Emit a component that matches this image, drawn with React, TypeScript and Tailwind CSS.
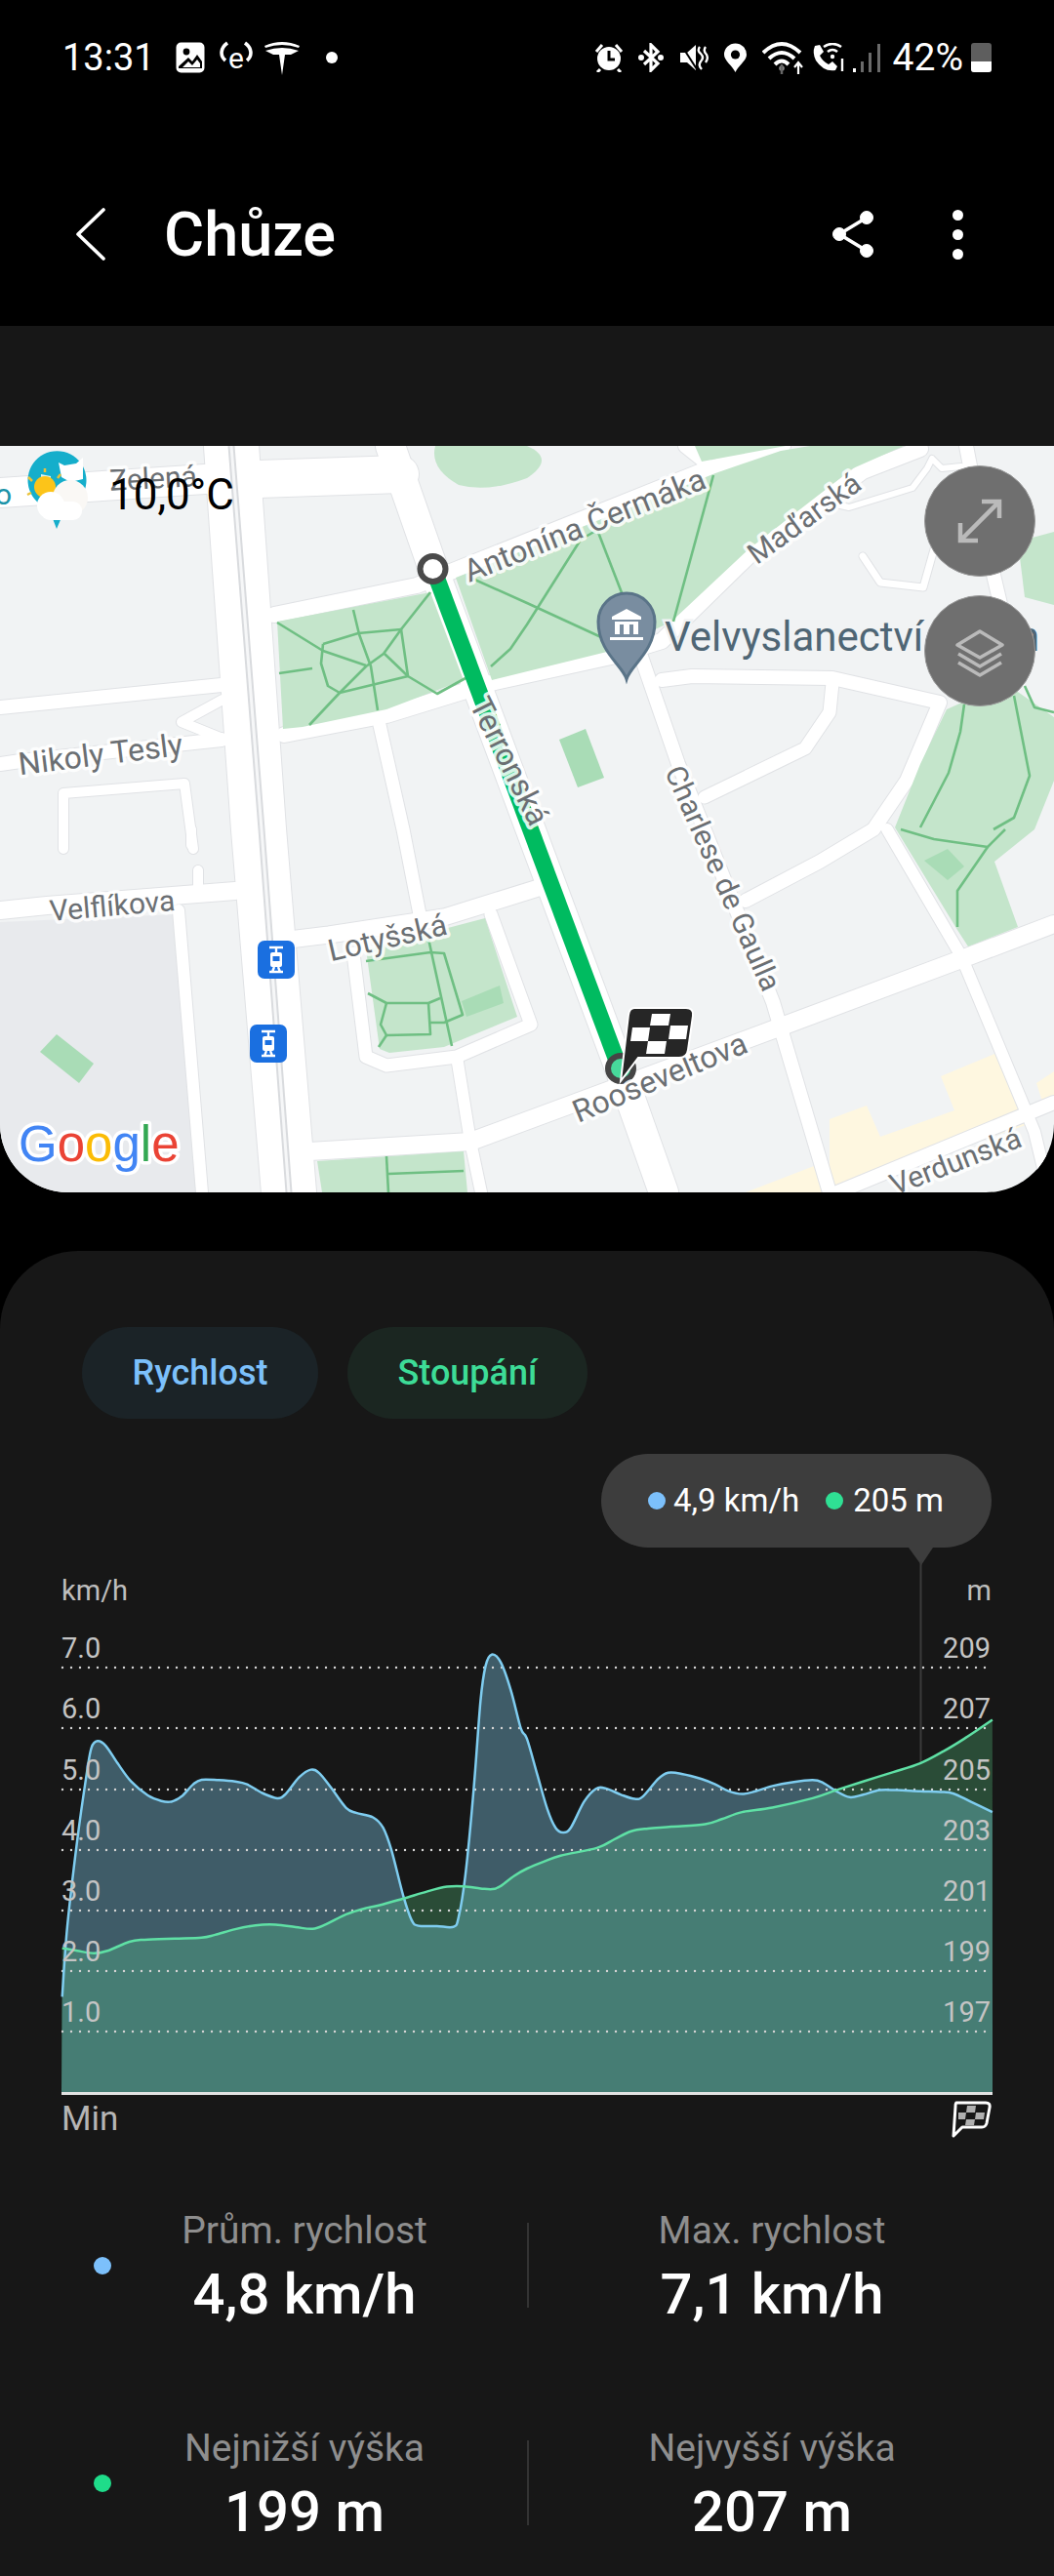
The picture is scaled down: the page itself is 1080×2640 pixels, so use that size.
import React from "react";

type Pt = [number, number];

const smooth = (pts: Pt[]) => {
  let d = `M${pts[0][0]},${pts[0][1]}`;
  for (let i = 0; i < pts.length - 1; i++) {
    const p0 = pts[Math.max(i - 1, 0)];
    const p1 = pts[i];
    const p2 = pts[i + 1];
    const p3 = pts[Math.min(i + 2, pts.length - 1)];
    const c1x = p1[0] + (p2[0] - p0[0]) / 6;
    const c1y = p1[1] + (p2[1] - p0[1]) / 6;
    const c2x = p2[0] - (p3[0] - p1[0]) / 6;
    const c2y = p2[1] - (p3[1] - p1[1]) / 6;
    d += ` C${c1x.toFixed(1)},${c1y.toFixed(1)} ${c2x.toFixed(1)},${c2y.toFixed(1)} ${p2[0].toFixed(1)},${p2[1].toFixed(1)}`;
  }
  return d;
};

// traced from the left / right half of the chart
const toL = (p: number[]): Pt => [p[0] / 2.904, 1600 + p[1] / 2.8];
const toR = (p: number[]): Pt => [540 + p[0] / 2.904, 1600 + p[1] / 2.8];

const speedPts: Pt[] = [
  ...[[185,1250],[200,1050],[230,800],[258,610],[272,535],[290,516],[315,530],[350,580],[390,632],[440,672],[480,688],[510,690],[540,675],[575,640],[600,627],[650,628],[700,632],[735,640],[780,665],[825,680],[850,668],[890,620],[925,598],[950,608],[985,650],[1030,708],[1060,722],[1110,735],[1140,765],[1165,830],[1200,960],[1225,1030],[1245,1046],[1300,1047],[1350,1049],[1365,1020],[1385,900],[1410,650],[1430,400],[1445,300],[1463,268],[1490,290],[1520,370],[1550,480]].map(toL),
  ...[[0,510],[30,610],[60,710],[85,765],[107,778],[130,765],[170,690],[205,653],[235,652],[280,670],[320,682],[345,675],[390,625],[420,607],[460,610],[520,625],[560,640],[600,660],[640,668],[680,660],[730,645],[790,634],[850,628],[880,635],[920,660],[960,677],[1000,670],[1050,657],[1100,657],[1170,660],[1230,662],[1270,667],[1320,690],[1385,720]].map(toR),
];

const heightPts: Pt[] = [
  ...[[185,1110],[230,1118],[280,1125],[320,1118],[385,1092],[430,1086],[520,1083],[600,1080],[640,1072],[700,1056],[760,1045],[820,1043],[880,1050],[930,1055],[970,1042],[1030,1013],[1090,995],[1130,987],[1200,968],[1270,948],[1330,934],[1380,933],[1430,939],[1465,941],[1490,932],[1530,903]].map(toL),
  ...[[0,882],[50,862],[100,845],[210,822],[260,798],[310,775],[360,767],[430,762],[530,755],[580,740],[640,720],[730,707],[850,680],[920,657],[1000,632],[1090,605],[1170,580],[1240,545],[1300,510],[1385,455]].map(toR),
];

const speedLine = smooth(speedPts);
const heightLine = smooth(heightPts);
const speedArea = `${speedLine} L1017,2144 L63,2144 Z`;
const heightArea = `${heightLine} L1017,2144 L63,2144 Z`;

const gridRows = [
  { y: 1709, l: "7.0", r: "209" },
  { y: 1771, l: "6.0", r: "207" },
  { y: 1834, l: "5.0", r: "205" },
  { y: 1896, l: "4.0", r: "203" },
  { y: 1958, l: "3.0", r: "201" },
  { y: 2020, l: "2.0", r: "199" },
  { y: 2082, l: "1.0", r: "197" },
];

const Chart = () => (
  <svg width="1080" height="564" viewBox="0 1586 1080 564" className="block shrink-0" fontFamily="Roboto, sans-serif">
    <defs>
      <clipPath id="speedClip">
        <path d={speedArea} />
      </clipPath>
    </defs>
    <path d="M931,1586 L956,1586 L944,1604 Z" fill="#3d3d3d" />
    <path d="M943.5,1600 V1832" stroke="#3a3a3a" strokeWidth="2" />
    <path d={speedArea} fill="#3f5c68" />
    <path d={heightArea} fill="#2a4c37" />
    <path d={heightArea} fill="#467d74" clipPath="url(#speedClip)" />
    {gridRows.map((g) => (
      <line key={g.y} x1="64" x2="1014" y1={g.y} y2={g.y} stroke="#d4d4d4" strokeWidth="2.4" strokeLinecap="round" strokeDasharray="0 9" />
    ))}
    <path d={speedLine} fill="none" stroke="#7fcdf0" strokeWidth="2.5" />
    <path d={heightLine} fill="none" stroke="#5fe0a5" strokeWidth="2.5" />
    <path d="M63,2145.5 H1017" stroke="#e2e2e2" strokeWidth="3" />
    <text x="63" y="1640" fontSize="29" fill="#bdbdbd">km/h</text>
    <text x="1016" y="1640" fontSize="29" fill="#bdbdbd" textAnchor="end">m</text>
    {gridRows.map((g) => (
      <g key={g.l} fontSize="29" fill="#c4c4c4">
        <text x="63" y={g.y - 10}>{g.l}</text>
        <text x="1015" y={g.y - 10} textAnchor="end">{g.r}</text>
      </g>
    ))}
  </svg>
);

const roads: [string, number][] = [
  ["237,457 265,850 296,1222", 56],
  ["0,505 225,490", 30],
  ["265,491 410,486", 38],
  ["400,457 444,583 635,1095 680,1222", 30],
  ["281,630 427,600 719,483 802,457", 16],
  ["702,457 722,473", 14],
  ["291,753 396,733 503,700 626,673 678,657 767,570 884,483 943,460", 16],
  ["656,670 695,783 792,1027 850,1222", 14],
  ["678,697 709,693 853,695 963,720 929,800 895,850 840,883 764,923", 14],
  ["853,700 850,730 825,767 722,817", 13],
  ["317,1180 482,1170 806,1050 985,983 1080,947", 18],
  ["0,933 48,928 241,913", 18],
  ["296,963 337,958 455,940 558,908", 17],
  ["0,783 21,780 227,758", 14],
  ["0,725 227,702", 14],
  ["389,743 413,850 430,937", 13],
  ["503,937 544,1050 468,1083 396,1092 375,1083 362,977", 13],
  ["468,1083 482,1170 493,1222", 12],
  ["909,850 985,980 1060,1160 1075,1222", 12],
  ["183,933 207,1222", 12],
  ["858,1222 1080,1130", 14],
  ["990,457 1005,534 1030,640 1040,700", 14],
  ["65,870 65,813 189,803 198,870", 10],
  ["884,570 902,597 946,602 957,563", 7],
  ["857,517 870,520 935,500 950,480 955,470 965,480 985,478", 6],
  ["228,717 186,740 228,757", 10],
  ["196,850 196,866", 10],
  ["203,892 203,912", 10],
];

const parkPaths: string[] = [
  "284,638 331,667 375,682",
  "441,607 411,645 393,670 375,683 348,710 317,743",
  "362,625 368,650 380,683 387,728",
  "331,660 367,649 411,645 418,693 448,711 477,695",
  "331,660 329,680 336,703 348,710 418,693",
  "394,670 418,693",
  "286,690 320,685",
  "731,487 690,637",
  "612,543 638,610",
  "595,553 612,543",
  "595,553 540,640 523,665 503,683",
  "482,592 540,618 616,653",
  "988,722 984,750 972,792 943,848",
  "923,850 957,860 1012,868 1030,850",
  "1012,868 981,913 981,950",
  "1039,713 1055,795 1039,838 1018,850",
  "1050,703 1060,725 1080,730",
  "375,985 441,976 455,977 474,1040 455,1048 441,1048",
  "439,962 463,1072",
  "377,1018 396,1028 439,1028 451,1023",
  "396,1028 390,1050 396,1061 441,1060 439,1028",
  "396,1061 388,1073",
  "396,1185 398,1222",
  "398,1203 475,1200",
];

const MapLabel = ({ x, y, a, size, children }: { x: number; y: number; a: number; size: number; children: React.ReactNode }) => (
  <text
    x={x}
    y={y}
    fontSize={size}
    fill="#6b6f73"
    textAnchor="middle"
    dominantBaseline="central"
    transform={`rotate(${a} ${x} ${y})`}
    stroke="#ffffff"
    strokeOpacity="0.85"
    strokeWidth="7"
    strokeLinejoin="round"
    style={{ paintOrder: "stroke" }}
  >
    {children}
  </text>
);

const Tram = ({ x, y }: { x: number; y: number }) => (
  <g transform={`translate(${x} ${y})`}>
    <rect width="38" height="39" rx="7" fill="#1a6fe0" />
    <path d="M12,7 H26 M12,32 H26 M19,7 V12 M15,32 L17,27 M23,32 L21,27" stroke="#fff" strokeWidth="2.4" fill="none" />
    <rect x="13" y="12" width="12" height="15" rx="2" fill="#fff" />
    <rect x="15.5" y="16" width="7" height="5" fill="#1a6fe0" />
  </g>
);

const MapDrawing = () => (
  <svg width="1080" height="765" viewBox="0 457 1080 765" className="block" fontFamily="Roboto, sans-serif">
    <rect x="0" y="457" width="1080" height="765" fill="#f1f3f4" />
    <path d="M0,945 L180,937 L205,1222 L0,1222 Z" fill="#e8eaed" />
    <path d="M850,1147 L888,1133 L902,1165 L978,1138 L964,1103 L1019,1080 L1060,1150 L850,1222 Z M764,1222 L847,1190 L857,1222 Z M1062,1110 L1080,1098 L1080,1130 L1070,1135 Z" fill="#fef7e0" />
    {roads.map(([p, w], i) => (
      <polyline key={i} points={p} fill="none" stroke="#e0e2e5" strokeWidth={w + 2} strokeLinejoin="round" strokeLinecap="round" />
    ))}
    {roads.map(([p, w], i) => (
      <polyline key={i} points={p} fill="none" stroke="#ffffff" strokeWidth={w} strokeLinejoin="round" strokeLinecap="round" />
    ))}
    <polyline points="237,457 268,850 296,1222" fill="none" stroke="#d9dbde" strokeWidth="7" />
    <polyline points="237,457 268,850 296,1222" fill="none" stroke="#f6f7f8" strokeWidth="3" />

    {/* parks */}
    <g fill="#c4e5cb">
      <path d="M446,457 L540,457 Q570,470 540,490 Q500,505 470,497 Q440,480 446,457 Z" />
      <path d="M284,637 L441,607 L475,697 L396,727 L310,745 L290,747 Z" />
      <path d="M467,592 L733,485 L800,462 L830,457 L926,457 L874,480 L767,563 L688,637 L626,667 L504,697 Z" />
      <path d="M719,473 L805,457 L712,457 Z" />
      <path d="M970,727 L943,783 L917,848 L981,953 L992,970 L1043,950 L1019,883 L1060,850 L1080,800 L1080,735 L1030,700 Z" />
      <path d="M1043,555 L1080,545 L1080,620 L1050,612 Z" />
      <path d="M375,973 L497,941 L530,1042 L455,1073 L399,1079 L389,1075 Z" />
      <path d="M325,1190 L475,1180 L479,1222 L330,1222 Z" />
    </g>
    <g fill="#a9dcb6">
      <path d="M573,758 L600,747 L619,797 L592,807 Z" />
      <path d="M41,1078 L58,1060 L96,1090 L81,1110 Z" />
      <path d="M947,882 L971,870 L988,888 L971,902 Z" />
      <path d="M473,1026 L512,1010 L516,1028 L478,1042 Z" />
    </g>
    {parkPaths.map((p, i) => (
      <polyline key={i} points={p} fill="none" stroke="#6fbf83" strokeWidth="2.6" strokeLinejoin="round" />
    ))}

    {/* route */}
    <polyline points="444,583 635,1095" fill="none" stroke="#00bb60" strokeWidth="17" />
    <circle cx="443.5" cy="583" r="13" fill="#fff" stroke="#4a4a4a" strokeWidth="6" />
    <circle cx="636" cy="1095" r="13" fill="#47d99b" stroke="#454545" strokeWidth="6" />

    <MapLabel x={599} y={538} a={-21.7} size={32}>Antonína Čermáka</MapLabel>
    <MapLabel x={824} y={531} a={-36} size={30}>Maďarská</MapLabel>
    <MapLabel x={522} y={780} a={63.5} size={32}>Terronská</MapLabel>
    <MapLabel x={103} y={773} a={-7} size={32}>Nikoly Tesly</MapLabel>
    <MapLabel x={115} y={928} a={-5} size={30}>Velflíkova</MapLabel>
    <MapLabel x={397} y={961} a={-13} size={31}>Lotyšská</MapLabel>
    <MapLabel x={741} y={900} a={66} size={30}>Charlese de Gaulla</MapLabel>
    <MapLabel x={676} y={1104} a={-22.7} size={32}>Rooseveltova</MapLabel>
    <MapLabel x={979} y={1190} a={-21} size={30}>Verdunská</MapLabel>
    <MapLabel x={157} y={490} a={-3} size={30}>Zelená</MapLabel>

    {/* embassy pin */}
    <path d="M642,696 C638,682 613,668 613,637 A29,29 0 0 1 671,637 C671,668 646,682 642,696 Z" fill="#798da0" stroke="#5a7488" strokeWidth="3" />
    <path d="M642,624 L627,632 V635 H657 V632 Z M630,637 H654 V650 H649 V640 H645 V650 H639 V640 H635 V650 H630 Z M625,653 H659 V656 H625 Z" fill="#fff" />
    <text x="681" y="667" fontSize="42" fill="#4f6675" stroke="#f1f3f4" strokeWidth="5" style={{ paintOrder: "stroke" }}>Velvyslanectví</text>
    <text x="1042" y="667" fontSize="42" fill="#4f6675">n</text>

    <Tram x={264} y={964} />
    <Tram x={256} y={1050} />

    {/* finish flag */}
    <path d="M650,1033 H703 Q711,1033 710,1041 L705,1076 Q704,1084 696,1084 L654,1084 L636,1108 L644,1040 Q645,1033 650,1033 Z" fill="#262626" stroke="#fff" strokeWidth="2" />
    <path d="M668,1039 H687 L685,1051 H666 Z M687,1051 H705 L703,1065 H685 Z M648,1053 H666 L664,1067 H646 Z M664,1067 H683 L681,1080 H662 Z" fill="#fff" />

    <text x="19" y="1190" fontFamily="'Liberation Sans', sans-serif" fontSize="51" stroke="#ffffff" strokeWidth="7" strokeLinejoin="round" style={{ paintOrder: "stroke" }}>
      <tspan fill="#4285f4">G</tspan>
      <tspan fill="#ea4335">o</tspan>
      <tspan fill="#fbbc05">o</tspan>
      <tspan fill="#4285f4">g</tspan>
      <tspan fill="#34a853">l</tspan>
      <tspan fill="#ea4335">e</tspan>
    </text>

    {/* weather pin */}
    <path d="M58,542 L50,521 A30,30 0 1 1 67,521 Z" fill="#15aecb" />
    <path d="M60,474 L66,477 L78,475 L85,469 V491 L72,494 L63,489 Z" fill="#fff" />
    <path d="M42,486 L52,488 V500 L42,500 Z" fill="#fff" opacity="0.85" />
    <circle cx="46" cy="499" r="11" fill="#fcc419" />
    <path d="M33,493 L29,489 M46,484 V480 M59,490 L62,486 M32,505 L28,507" stroke="#e9c23a" strokeWidth="2.5" />
    <circle cx="72" cy="510" r="18" fill="#faf8f5" />
    <circle cx="52" cy="518" r="14" fill="#fff" />
    <rect x="42" y="514" width="42" height="19" rx="9" fill="#fff" />
    <text x="-5" y="517" fontSize="30" fill="#1c93a8">o</text>
  </svg>
);

const Expand = () => (
  <svg width="60" height="60" viewBox="0 0 60 60" fill="none" stroke="#bababa" strokeWidth="4.5">
    <path d="M10,50 L50,10 M32,10 H50 V27 M10,32 V50 H28" />
  </svg>
);

const Layers = () => (
  <svg width="60" height="60" viewBox="0 0 60 60" fill="none" stroke="#bababa" strokeWidth="3.5" strokeLinejoin="round">
    <path d="M30,10 L53,24 L30,37 L7,24 Z" />
    <path d="M8,33 L30,46 L52,33 M8,42 L30,55 L52,42" />
  </svg>
);

const ImageIcon = () => (
  <svg width="30" height="32" viewBox="0 0 30 32" className="ml-[21px]">
    <rect x="1.5" y="1.5" width="27" height="29" rx="4" fill="#fff" stroke="#fff" strokeWidth="2" />
    <circle cx="11" cy="10" r="3.4" fill="#000" />
    <path d="M3,25 L13,16 L17,20 L22,13 L27,20 V27 H3 Z" fill="#000" />
    <path d="M7,26 L13,20 L17,24 L22,18 L25,22 V26 Z" fill="#fff" />
  </svg>
);

const EdgeIcon = () => (
  <svg width="36" height="38" viewBox="0 0 36 38" className="ml-[14px]" fontFamily="Roboto, sans-serif">
    <text x="18" y="30" fontSize="30" fill="#fff" textAnchor="middle">e</text>
    <path d="M9,4 C2,9 1,17 7,22 M27,4 C34,9 35,17 29,22" stroke="#fff" strokeWidth="3.6" fill="none" />
  </svg>
);

const TeslaIcon = () => (
  <svg width="38" height="36" viewBox="0 0 38 36" className="ml-[10px]" fill="#fff">
    <path d="M1,6 Q19,-2 37,6 L36,8 Q19,2 2,8 Z" />
    <path d="M2,11 Q19,5 36,11 L28,15 H22 L19,36 L16,15 H10 Z" />
  </svg>
);

const StatusRight = () => (
  <div className="flex items-center">
    {/* alarm */}
    <svg width="30" height="30" viewBox="0 0 30 30">
      <path d="M2,9 L8,2 M28,9 L22,2" stroke="#fff" strokeWidth="3" />
      <circle cx="15" cy="16" r="12" fill="#fff" />
      <path d="M15,8 V17 H21" stroke="#000" strokeWidth="3" fill="none" />
      <path d="M6,27 L3,30 M24,27 L27,30" stroke="#fff" strokeWidth="3" />
    </svg>
    {/* bluetooth */}
    <svg width="28" height="30" viewBox="0 0 28 30" className="ml-[14px]" fill="none" stroke="#fff" strokeWidth="3.2">
      <path d="M7,8 L21,21 L14,28 V2 L21,9 L7,22" />
      <circle cx="4" cy="15" r="1.4" fill="#fff" />
      <circle cx="24" cy="15" r="1.4" fill="#fff" />
    </svg>
    {/* mute */}
    <svg width="30" height="30" viewBox="0 0 30 30" className="ml-[15px]">
      <path d="M1,10 H8 L17,2 V28 L8,20 H1 Z" fill="#fff" />
      <path d="M21,4 Q18,8 22,11 Q26,15 22,19 Q19,23 23,27 M27,4 Q24,8 28,12 Q30,16 27,20" stroke="#fff" strokeWidth="2.4" fill="none" />
      <path d="M2,2 L20,30" stroke="#000" strokeWidth="2" />
    </svg>
    {/* location */}
    <svg width="25" height="30" viewBox="0 0 25 30" className="ml-[15px]">
      <path d="M12.5,30 C9,23 1,18 1,12 A11.5,11.5 0 0 1 24,12 C24,18 16,23 12.5,30 Z" fill="#fff" />
      <circle cx="12.5" cy="12" r="4.6" fill="#000" />
    </svg>
    {/* wifi */}
    <svg width="45" height="34" viewBox="0 0 45 34" className="ml-[15px]" fill="none">
      <path d="M1,12 Q20,-6 39,12 M7,18 Q20,6 33,18 M13,24 Q20,17 27,24" stroke="#fff" strokeWidth="4" />
      <circle cx="20" cy="28" r="2.8" fill="#8a8a8a" />
      <path d="M20,24 V34" stroke="#666" strokeWidth="2.5" />
      <path d="M37,34 V24 M33,27 L37,22 L41,27" stroke="#fff" strokeWidth="2.2" />
    </svg>
    {/* wifi call */}
    <svg width="35" height="30" viewBox="0 0 35 30" className="ml-[5px]">
      <path d="M4,3 L9,2 L13,9 L9,13 Q12,19 18,22 L22,19 L27,24 L25,28 Q13,30 5,18 Q1,10 4,3 Z" fill="#fff" />
      <path d="M13,4 Q22,-2 31,4 M17,9 Q22,5 27,9" stroke="#fff" strokeWidth="2.6" fill="none" />
      <circle cx="22" cy="14" r="2.2" fill="#fff" />
      <path d="M32,16 V29" stroke="#fff" strokeWidth="2.4" />
    </svg>
    {/* signal */}
    <svg width="29" height="30" viewBox="0 0 29 30" className="ml-[8px]">
      <rect x="0" y="26" width="3" height="4" fill="#fff" />
      <rect x="8" y="19" width="3" height="11" fill="#6a6a6a" />
      <rect x="16" y="10" width="3" height="20" fill="#6a6a6a" />
      <rect x="25" y="1" width="3" height="29" fill="#6a6a6a" />
    </svg>
    <span className="ml-[12px] text-[39px] leading-none text-white">42%</span>
    {/* battery */}
    <div className="ml-[8px] flex h-[30px] w-[21px] flex-col overflow-hidden rounded-[3px] bg-[#5e5e5e]">
      <div className="mt-auto h-[11px] bg-white" />
    </div>
  </div>
);

const StatRow = ({ dot, a, b }: { dot: string; a: [string, string]; b: [string, string] }) => (
  <div className="flex h-[223px] shrink-0 items-center">
    <div className={`ml-[96px] h-[18px] w-[18px] shrink-0 rounded-full ${dot}`} />
    <StatCell label={a[0]} value={a[1]} cls="w-[426px] pr-[30px]" />
    <div className="h-[87px] w-[2px] shrink-0 bg-[#333333]" />
    <StatCell label={b[0]} value={b[1]} cls="w-[498px]" />
  </div>
);

const StatCell = ({ label, value, cls }: { label: string; value: string; cls: string }) => (
  <div className={`flex flex-col items-center pt-[4px] ${cls}`}>
    <span className="h-[54px] text-[39px] leading-[54px] text-[#8e8e8e]">{label}</span>
    <span className="h-[76px] text-[58px] leading-[76px] font-medium text-white">{value}</span>
  </div>
);

const App: React.FC = () => {
  return (
    <div className="flex h-[2640px] w-[1080px] flex-col overflow-hidden bg-black font-['Roboto',sans-serif]">
      {/* Status bar */}
      <div className="flex h-[118px] shrink-0 items-center justify-between pr-[64px] pl-[64px]">
        <div className="flex items-center">
          <span className="text-[38px] leading-none text-white">13:31</span>
          <ImageIcon />
          <EdgeIcon />
          <TeslaIcon />
          <div className="ml-[26px] h-[12px] w-[12px] rounded-full bg-white" />
        </div>
        <StatusRight />
      </div>

      {/* App bar */}
      <div className="flex h-[216px] shrink-0 items-center pt-[28px] pr-[93px] pl-[76px]">
        <svg width="34" height="56" viewBox="0 0 34 56" fill="none" stroke="#fff" strokeWidth="3.6" strokeLinecap="round" strokeLinejoin="round">
          <path d="M30,3 L4,28 L30,53" />
        </svg>
        <span className="ml-[58px] text-[63px] leading-none font-medium text-white">Chůze</span>
        <svg width="46" height="50" viewBox="0 0 46 50" className="mr-[79px] ml-auto" fill="#fff" stroke="#fff">
          <circle cx="37" cy="8" r="6.5" />
          <circle cx="9" cy="25" r="6.5" />
          <circle cx="37" cy="42" r="6.5" />
          <path d="M37,8 L9,25 L37,42" fill="none" strokeWidth="3.6" />
        </svg>
        <div className="flex flex-col gap-[9px]">
          <div className="h-[11px] w-[11px] rounded-full bg-white" />
          <div className="h-[11px] w-[11px] rounded-full bg-white" />
          <div className="h-[11px] w-[11px] rounded-full bg-white" />
        </div>
      </div>

      <div className="h-[123px] shrink-0 bg-[#171717]" />

      {/* Map */}
      <div className="relative h-[765px] shrink-0 overflow-hidden rounded-b-[70px]">
        <MapDrawing />
        <span className="absolute top-[20px] left-[112px] text-[44px] leading-[60px] text-black">10,0°C</span>
        <div className="absolute top-[20px] left-[947px] flex h-[114px] w-[114px] items-center justify-center rounded-full border border-[#9a9a9a] bg-[#6f6f6f]">
          <Expand />
        </div>
        <div className="absolute top-[153px] left-[947px] flex h-[114px] w-[114px] items-center justify-center rounded-full border border-[#9a9a9a] bg-[#6f6f6f]">
          <Layers />
        </div>
      </div>

      {/* Chart card */}
      <div className="mt-[60px] flex min-h-0 flex-1 flex-col rounded-t-[80px] bg-[#171717] pt-[78px]">
        <div className="flex gap-[30px] pl-[84px]">
          <div className="flex h-[94px] w-[242px] items-center justify-center rounded-full bg-[#1b2327] text-[36px] font-medium text-[#7cc0fb]">
            Rychlost
          </div>
          <div className="flex h-[94px] w-[246px] items-center justify-center rounded-full bg-[#1b2621] text-[36px] font-medium text-[#3ddc97]">
            Stoupání
          </div>
        </div>

        <div className="mt-[36px] mr-[64px] flex h-[96px] w-[400px] shrink-0 items-center self-end rounded-full bg-[#3d3d3d] pl-[48px] text-[33px] text-white">
          <div className="h-[18px] w-[18px] rounded-full bg-[#7cc0fb]" />
          <span className="ml-[8px]">4,9 km/h</span>
          <div className="ml-[27px] h-[18px] w-[18px] rounded-full bg-[#2fe094]" />
          <span className="ml-[10px]">205 m</span>
        </div>

        <Chart />

        <div className="flex h-[44px] shrink-0 items-center justify-between pr-[64px] pl-[63px]">
          <span className="text-[35px] text-[#b5b5b5]">Min</span>
          <svg width="42" height="38" viewBox="0 0 42 38">
            <path d="M6,2 H36 Q41,2 40,7 L37,23 Q36,27 32,27 H12 L3,36 L5,6 Q5,2 6,2 Z" fill="#171717" stroke="#fff" strokeWidth="3" strokeLinejoin="round" />
            <path d="M17,5 H26 L25,12 H16 Z M26,12 H35 L34,19 H25 Z M8,12 H16 L15,19 H8 Z M16,19 H25 L24,25 H15 Z" fill="#b0b0b0" />
          </svg>
        </div>

        <div className="mt-[16px] flex flex-col">
          <StatRow dot="bg-[#7cc0fb]" a={["Prům. rychlost", "4,8 km/h"]} b={["Max. rychlost", "7,1 km/h"]} />
          <StatRow dot="bg-[#1fdc8a]" a={["Nejnižší výška", "199 m"]} b={["Nejvyšší výška", "207 m"]} />
        </div>
      </div>
    </div>
  );
};

export default App;
